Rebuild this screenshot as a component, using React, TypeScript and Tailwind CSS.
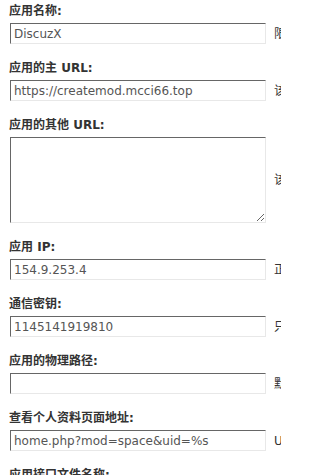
import React from "react";

type Field = {
  label: string;
  value?: string;
  desc: string;
  textarea?: boolean;
};

const fields: Field[] = [
  { label: "应用名称:", value: "DiscuzX", desc: "限 20 字节。" },
  {
    label: "应用的主 URL:",
    value: "https://createmod.mcci66.top",
    desc: "该应用与 UCenter 通信的接口 URL，结尾请不要加“/”",
  },
  {
    label: "应用的其他 URL:",
    textarea: true,
    desc: "该应用可以访问的其他 URL，每行一个",
  },
  {
    label: "应用 IP:",
    value: "154.9.253.4",
    desc: "正常情况下留空即可。",
  },
  {
    label: "通信密钥:",
    value: "1145141919810",
    desc: "只允许使用英文字母及数字，限 64 字节。",
  },
  {
    label: "应用的物理路径:",
    value: "",
    desc: "默认请留空，如果填写的为相对路径",
  },
  {
    label: "查看个人资料页面地址:",
    value: "home.php?mod=space&uid=%s",
    desc: "URL中域名后面的部分",
  },
  { label: "应用接口文件名称:", value: "uc.php", desc: "应用接口文件名称" },
];

const ctrlBorder =
  "border border-solid border-t-[#666] border-l-[#666] border-r-[#e8e8e8] border-b-[#e8e8e8] bg-white text-[#555] text-[12px] font-['DejaVu_Sans','Noto_Sans_CJK_SC',sans-serif] outline-none";

export default function App() {
  return (
    <div className="w-[281px] h-[475px] overflow-hidden bg-white pt-[2px] font-['DejaVu_Sans','Noto_Sans_CJK_SC',sans-serif] text-[12px]">
      {fields.map((f, i) => (
        <div key={i} className="mb-[15px]">
          <div className="h-[18px] leading-[18px] pl-[9px] font-bold text-[#333] whitespace-nowrap">
            {f.label}
          </div>
          <div className="mt-[3px] flex items-center whitespace-nowrap">
            {f.textarea ? (
              <textarea
                className={`ml-[10px] shrink-0 w-[256px] h-[86px] p-[2px] ${ctrlBorder}`}
                defaultValue=""
              />
            ) : (
              <input
                type="text"
                readOnly
                className={`ml-[10px] shrink-0 w-[256px] h-[21px] px-[3px] py-0 ${ctrlBorder}`}
                value={f.value}
              />
            )}
            <span className="ml-[8px] text-[#333] text-[12px] leading-[14px]">
              {f.desc}
            </span>
          </div>
        </div>
      ))}
    </div>
  );
}
